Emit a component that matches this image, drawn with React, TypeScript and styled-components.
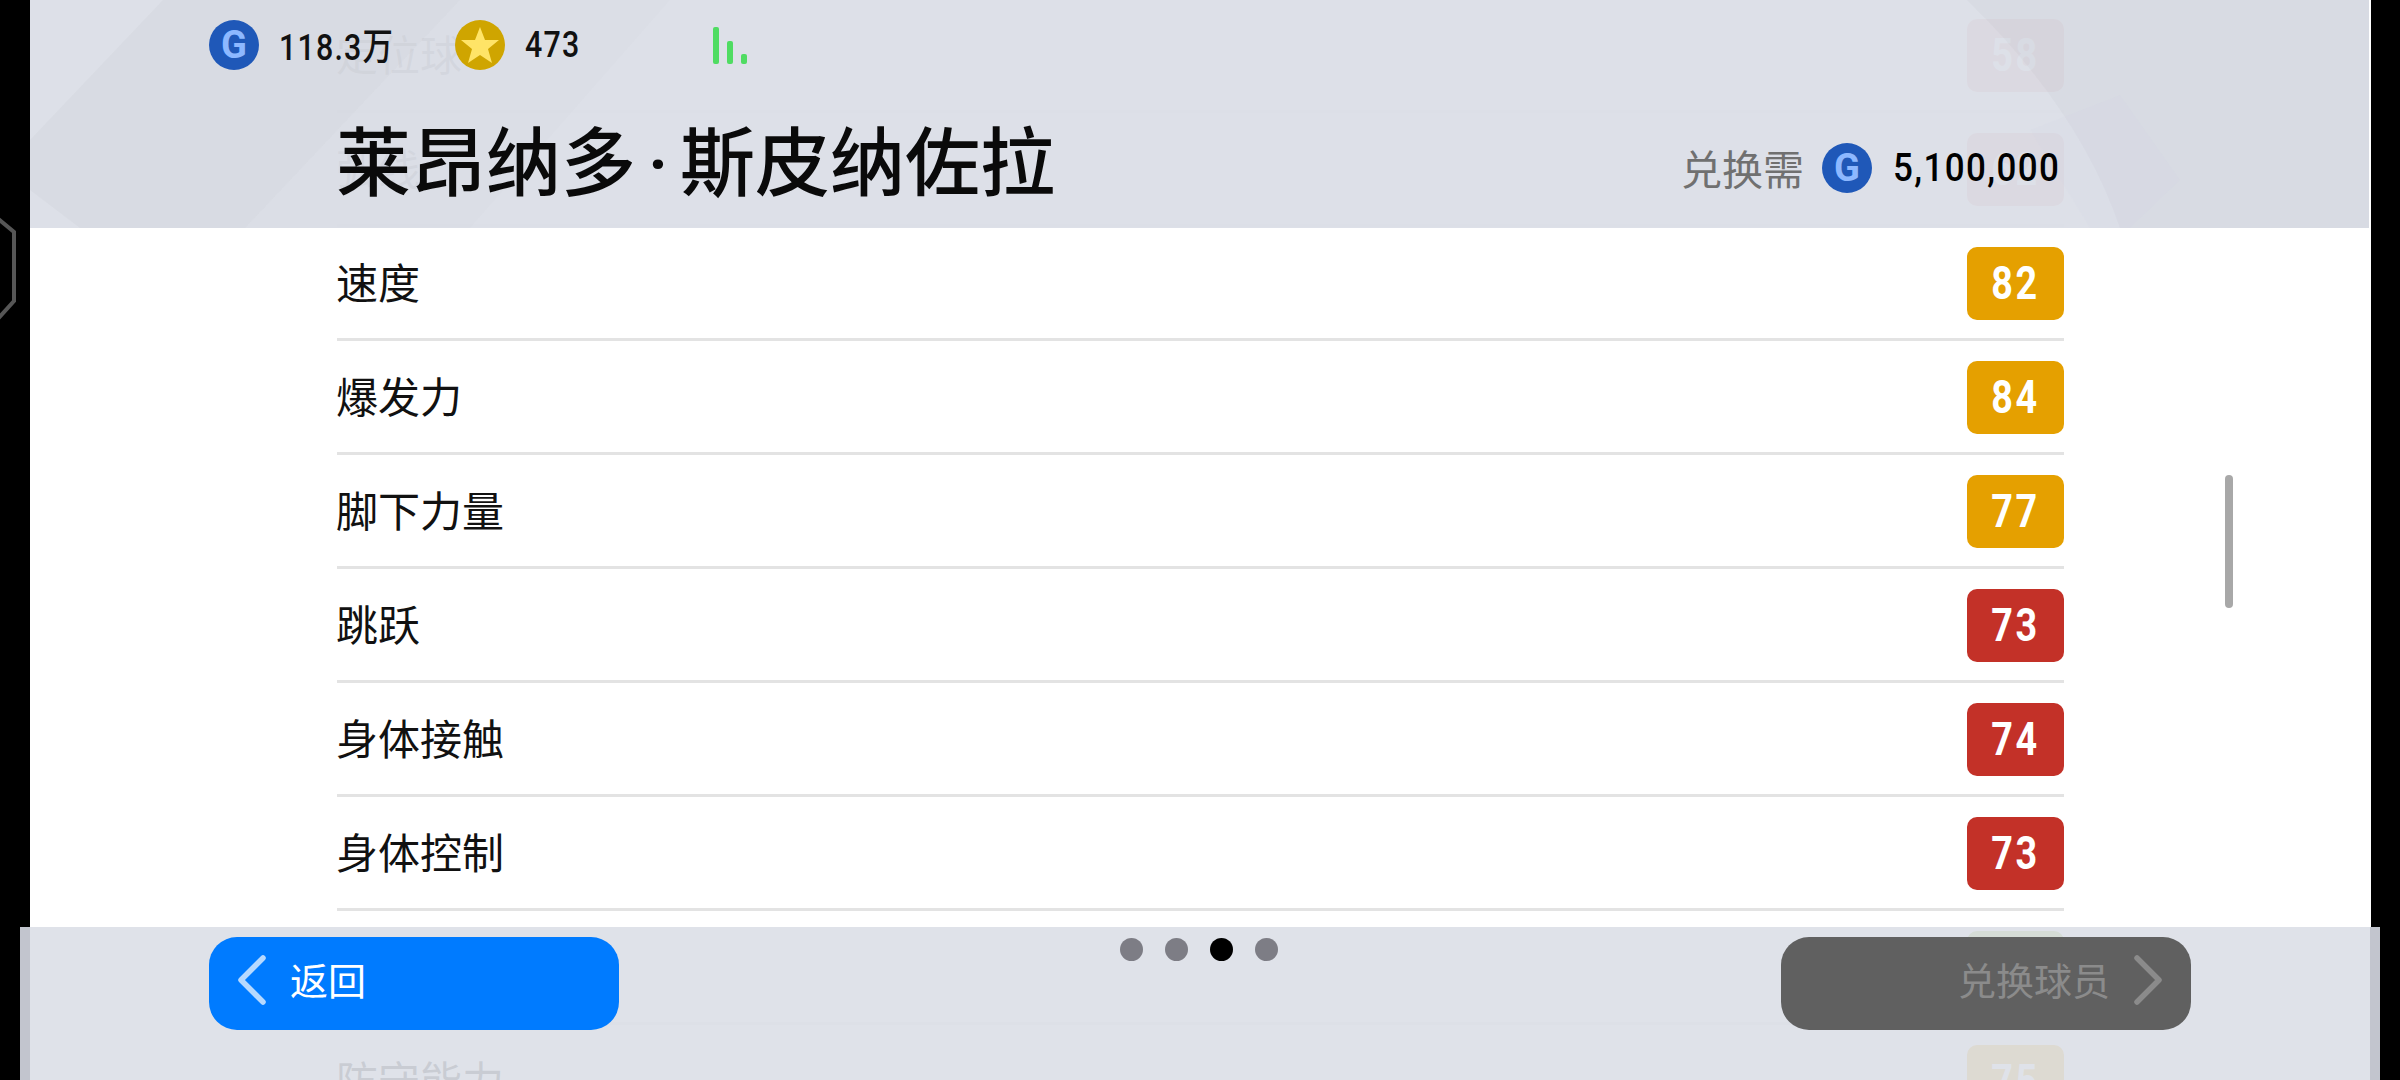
import React from "react";
import styled, { createGlobalStyle } from "styled-components";

interface Stat {
  label: string;
  value: number;
  tone: "red" | "orange" | "green";
}

const stats: Stat[] = [
  { label: "定位球", value: 58, tone: "red" },
  { label: "弧线", value: 62, tone: "red" },
  { label: "速度", value: 82, tone: "orange" },
  { label: "爆发力", value: 84, tone: "orange" },
  { label: "脚下力量", value: 77, tone: "orange" },
  { label: "跳跃", value: 73, tone: "red" },
  { label: "身体接触", value: 74, tone: "red" },
  { label: "身体控制", value: 73, tone: "red" },
  { label: "体力", value: 88, tone: "green" },
  { label: "防守能力", value: 75, tone: "orange" },
];

const toneColors = {
  red: "#c33128",
  orange: "#e5a000",
  green: "#8dbb2e",
};

const App = () => {
  return (
    <Screen>
      <GlobalStyle />
      <BezelMark viewBox="0 0 20 110" fill="none">
        <path d="M-4 0 L14 15 L14 84 L-4 104" stroke="#565656" strokeWidth="4" />
      </BezelMark>

      <Panel>
        {stats.map((stat) => (
          <Row key={stat.label}>
            <RowLabel>{stat.label}</RowLabel>
            <Badge $tone={stat.tone}>
              <BadgeValue>{stat.value}</BadgeValue>
            </Badge>
          </Row>
        ))}
      </Panel>

      <ScrollThumb />

      <Header>
        <HeaderArt viewBox="0 0 2339 228" preserveAspectRatio="none">
          <polygon points="133,0 430,0 215,228 50,228 0,190 0,140" fill="#8a8a80" opacity="0.05" />
          <polygon points="430,0 640,0 440,228 215,228" fill="#8a8a80" opacity="0.02" />
          <path d="M1937 0 Q2050 110 2090 228 L2339 228 L2339 0 Z" fill="#8a8a80" opacity="0.05" />
          <polygon points="2000,130 2090,95 2150,180 2100,228 2060,228" fill="#c8cfe4" opacity="0.08" />
        </HeaderArt>
        <CoinBar>
          <CoinGroup $width={246}>
            <GCoin>G</GCoin>
            <CoinAmount>118.3万</CoinAmount>
          </CoinGroup>
          <CoinGroup $width={258}>
            <StarCoin>
              <svg viewBox="0 0 50 50" width="50" height="50">
                <polygon
                  points="25,7 30,20 44,20 33,29 37,43 25,35 13,43 17,29 6,20 20,20"
                  fill="#ffe467"
                />
              </svg>
            </StarCoin>
            <CoinAmount>473</CoinAmount>
          </CoinGroup>
          <Signal>
            <SignalBar $height={37} />
            <SignalBar $height={23} />
            <SignalBar $height={10} />
          </Signal>
        </CoinBar>
        <TitleRow>
          <Title>
            莱昂纳多<TitleDot>·</TitleDot>斯皮纳佐拉
          </Title>
          <Cost>
            <CostLabel>兑换需</CostLabel>
            <GCoin>G</GCoin>
            <CostAmount>5,100,000</CostAmount>
          </Cost>
        </TitleRow>
      </Header>

      <Footer>
        <NavButton $disabled={false}>
          <Chevron viewBox="0 0 30 50" fill="none" stroke="#b6d9ff">
            <path d="M26 3 L4 25 L26 47" />
          </Chevron>
          <NavText>返回</NavText>
        </NavButton>
        <Dots>
          <Dot />
          <Dot />
          <Dot $active />
          <Dot />
        </Dots>
        <NavButton $disabled>
          <NavText>兑换球员</NavText>
          <Chevron viewBox="0 0 30 50" fill="none" stroke="#8b8b8b">
            <path d="M4 3 L26 25 L4 47" />
          </Chevron>
        </NavButton>
      </Footer>
    </Screen>
  );
};

export default App;

const GlobalStyle = createGlobalStyle`
  html, body {
    margin: 0;
    padding: 0;
    background: #000;
  }
`;

const sansCjk = `"Noto Sans CJK SC", "Noto Sans", sans-serif`;
const digits = `Roboto, "Noto Sans CJK SC", sans-serif`;

const Screen = styled.div`
  position: relative;
  width: 2400px;
  height: 1080px;
  overflow: hidden;
  background: #000;
  font-family: ${sansCjk};
`;

const BezelMark = styled.svg`
  position: absolute;
  left: 0;
  top: 217px;
  width: 20px;
  height: 110px;
`;

const Panel = styled.div`
  box-sizing: border-box;
  width: 2341px;
  height: 1080px;
  margin-left: 30px;
  padding: 0 307px;
  overflow: hidden;
  background: #fff;
`;

const Row = styled.div`
  box-sizing: border-box;
  display: flex;
  align-items: center;
  justify-content: space-between;
  height: 113px;
  margin-bottom: 1px;
  padding-top: 1px;
  border-bottom: 3px solid #e3e3e3;
`;

const RowLabel = styled.div`
  margin: -6px 0 0 -1px;
  font-size: 42px;
  line-height: 1;
  color: #111;
`;

const Badge = styled.div<{ $tone: Stat["tone"] }>`
  display: flex;
  align-items: center;
  justify-content: center;
  width: 97px;
  height: 73px;
  border-radius: 10px;
  background: ${(p) => toneColors[p.$tone]};
`;

const BadgeValue = styled.span`
  display: inline-block;
  margin-top: -1px;
  transform: scaleX(0.82);
  color: #fff;
  font-family: ${digits};
  font-size: 46px;
  font-weight: 700;
  letter-spacing: 3px;
`;

const ScrollThumb = styled.div`
  position: absolute;
  left: 2225px;
  top: 475px;
  width: 8px;
  height: 133px;
  border-radius: 4px;
  background: #a8a8a8;
`;

const Header = styled.header`
  position: absolute;
  left: 30px;
  top: 0;
  box-sizing: border-box;
  width: 2339px;
  height: 228px;
  padding: 20px 310px 0 179px;
  background: rgba(220, 223, 231, 0.97);
`;

const HeaderArt = styled.svg`
  position: absolute;
  inset: 0;
  width: 100%;
  height: 100%;
`;

const CoinBar = styled.div`
  position: relative;
  display: flex;
  align-items: center;
  height: 50px;
`;

const CoinGroup = styled.div<{ $width: number }>`
  display: flex;
  align-items: center;
  gap: 20px;
  width: ${(p) => p.$width}px;
`;

const GCoin = styled.div`
  flex: none;
  display: flex;
  align-items: center;
  justify-content: center;
  width: 50px;
  height: 50px;
  border-radius: 50%;
  background: #1f58b8;
  color: #8db8ff;
  font-family: Roboto, sans-serif;
  font-size: 38px;
  font-weight: 700;
  line-height: 1;
`;

const StarCoin = styled.div`
  flex: none;
  width: 50px;
  height: 50px;
  border-radius: 50%;
  background: #cfa500;
`;

const CoinAmount = styled.span`
  display: inline-block;
  margin-top: -2px;
  white-space: nowrap;
  transform: scaleX(0.82);
  transform-origin: left center;
  font-family: ${digits};
  font-size: 37px;
  font-weight: 500;
  letter-spacing: 1.5px;
  color: #111;
`;

const Signal = styled.div`
  display: flex;
  align-items: flex-end;
  gap: 8px;
  height: 37px;
`;

const SignalBar = styled.span<{ $height: number }>`
  width: 6px;
  height: ${(p) => p.$height}px;
  border-radius: 2px;
  background: #4fdc62;
`;

const TitleRow = styled.div`
  position: relative;
  display: flex;
  align-items: center;
  justify-content: space-between;
  margin-top: 42px;
  margin-left: 127px;
`;

const Title = styled.h1`
  margin: 0;
  font-size: 75px;
  font-weight: 500;
  line-height: 92px;
  color: #0a0a0a;
  white-space: nowrap;
`;

const TitleDot = styled.span`
  display: inline-block;
  width: 44px;
  font-family: Roboto, sans-serif;
  text-align: center;
`;

const Cost = styled.div`
  display: flex;
  align-items: center;
  margin-top: 13px;
`;

const CostLabel = styled.span`
  margin-right: 18px;
  font-size: 41px;
  line-height: 1;
  color: #707070;
`;

const CostAmount = styled.span`
  display: inline-block;
  width: 166px;
  margin-left: 21px;
  white-space: nowrap;
  transform: scaleX(0.92);
  transform-origin: left center;
  font-family: ${digits};
  font-size: 38px;
  font-weight: 500;
  letter-spacing: 1.5px;
  color: #000;
`;

const Footer = styled.footer`
  position: absolute;
  left: 20px;
  top: 927px;
  box-sizing: border-box;
  display: flex;
  align-items: flex-start;
  justify-content: space-between;
  width: 2360px;
  height: 153px;
  padding: 10px 179px 0;
  border-left: 10px solid #c2c5ce;
  border-right: 10px solid #c2c5ce;
  background: rgba(220, 223, 231, 0.91);
`;

const NavButton = styled.div<{ $disabled: boolean }>`
  box-sizing: border-box;
  display: flex;
  align-items: center;
  justify-content: ${(p) => (p.$disabled ? "flex-end" : "flex-start")};
  gap: 23px;
  width: 410px;
  height: 93px;
  padding: 0 28px;
  border-radius: 28px;
  background: ${(p) => (p.$disabled ? "#606060" : "#007bff")};
  color: ${(p) => (p.$disabled ? "#8b8b8b" : "#fff")};
`;

const NavText = styled.span`
  font-size: 38px;
  line-height: 1;
  margin-top: -9px;
`;

const Chevron = styled.svg`
  flex: none;
  width: 30px;
  height: 50px;
  margin-top: -8px;

  path {
    stroke-width: 5.5px;
    stroke-linecap: round;
    stroke-linejoin: round;
  }
`;

const Dots = styled.div`
  display: flex;
  gap: 22px;
  margin: 1px 2px 0 0;
`;

const Dot = styled.span<{ $active?: boolean }>`
  width: 23px;
  height: 23px;
  border-radius: 50%;
  background: ${(p) => (p.$active ? "#000" : "#7d7d85")};
`;
